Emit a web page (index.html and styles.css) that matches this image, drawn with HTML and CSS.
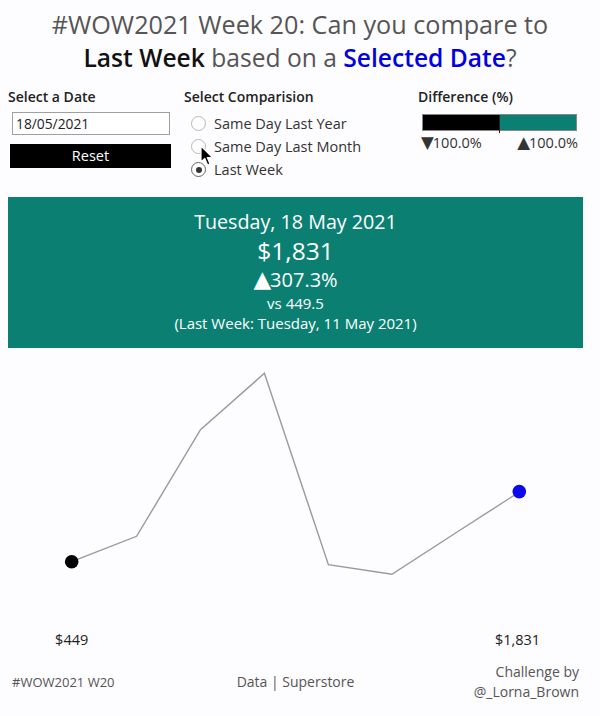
FILE: index.html
```html
<!DOCTYPE html>
<html lang="en">
<head>
<meta charset="utf-8">
<title>#WOW2021 Week 20</title>
<link rel="stylesheet" href="styles.css">
</head>
<body>
<div class="page">
  <header class="title">
    <div class="title-line">#WOW2021 Week 20: Can you compare to</div>
    <div class="title-line title-line-2"><span class="em-dark">Last Week</span> based on a <span class="em-blue">Selected Date</span>?</div>
  </header>

  <section class="controls">
    <div class="ctl ctl-date">
      <div class="ctl-label">Select a Date</div>
      <div class="date-box">18/05/2021</div>
      <div class="reset-btn">Reset</div>
    </div>
    <div class="ctl ctl-compare">
      <div class="ctl-label">Select Comparision</div>
      <div class="radio-row"><span class="radio"></span><span>Same Day Last Year</span></div>
      <div class="radio-row"><span class="radio"></span><span>Same Day Last Month</span></div>
      <div class="radio-row"><span class="radio radio-on"></span><span>Last Week</span></div>
      <svg class="cursor" width="14" height="22" viewBox="0 0 14 22">
        <path d="M1 1 L1 17 L4.8 13.4 L7.6 20 L10 19 L7.3 12.6 L12.5 12.6 Z" fill="#000" stroke="#fff" stroke-width="1.2" stroke-linejoin="round"/>
      </svg>
    </div>
    <div class="ctl ctl-diff">
      <div class="ctl-label">Difference (%)</div>
      <div class="diff-bar"><span class="diff-neg"></span><span class="diff-pos"></span><span class="diff-tick"></span></div>
      <div class="diff-legend"><span><span class="tri">▼</span>100.0%</span><span><span class="tri">▲</span>100.0%</span></div>
    </div>
  </section>

  <section class="kpi">
    <div class="kpi-date">Tuesday, 18 May 2021</div>
    <div class="kpi-value">$1,831</div>
    <div class="kpi-change"><span class="tri">▲</span>307.3%</div>
    <div class="kpi-small kpi-vs">vs 449.5</div>
    <div class="kpi-small">(Last Week: Tuesday, 11 May 2021)</div>
  </section>

  <svg class="chart" width="600" height="307" viewBox="0 348 600 307">
    <polyline points="71.6,561.7 136.6,536.3 200.5,429.7 264.4,373.3 328.4,564.7 391.9,574.3 455.6,533 519.3,492" fill="none" stroke="#999" stroke-width="1.4" stroke-linejoin="miter"/>
    <circle cx="71.7" cy="561.7" r="6.8" fill="#000"/>
    <circle cx="519.3" cy="491.6" r="6.8" fill="#0a0aeb"/>
    <text class="chart-label" x="71.7" y="645" text-anchor="middle">$449</text>
    <text class="chart-label" x="517.5" y="645" text-anchor="middle">$1,831</text>
  </svg>

  <footer class="footer">
    <div class="foot-left">#WOW2021 W20</div>
    <div class="foot-mid">Data | Superstore</div>
    <div class="foot-right">Challenge by<br>@_Lorna_Brown</div>
  </footer>
</div>
</body>
</html>
```

FILE: styles.css
```css
html, body {
  margin: 0;
  padding: 0;
  background: #fdfcfe;
}

body {
  font-family: "Open Sans", Lato, "Liberation Sans", sans-serif;
  color: #333;
}

.page {
  width: 600px;
  height: 716px;
  display: flex;
  flex-direction: column;
  overflow: hidden;
}

.title {
  padding-top: 7px;
  margin-bottom: 13px;
  text-align: center;
  color: #555;
  font-size: 25.2px;
  line-height: 34px;
}

.title-line-2 {
  font-size: 24.6px;
}

.em-dark {
  color: #111;
  font-weight: 600;
}

.em-blue {
  color: #0000e0;
  font-weight: 600;
}

.controls {
  display: flex;
  position: relative;
  height: 109px;
}

.ctl {
  display: flex;
  flex-direction: column;
  position: relative;
}

.ctl-label {
  font-size: 14px;
  line-height: 18px;
  font-weight: 600;
  color: #222;
}

.ctl-date {
  margin-left: 8px;
  width: 163px;
}

.date-box {
  margin-top: 6px;
  margin-left: 4px;
  width: 153px;
  height: 21px;
  border: 1px solid #a0a0a0;
  background: #fff;
  font-size: 13.8px;
  line-height: 21px;
  padding-left: 3px;
  box-sizing: content-box;
  color: #222;
}

.reset-btn {
  margin-top: 9px;
  margin-left: 2px;
  width: 161px;
  height: 24px;
  background: #000;
  color: #fff;
  font-size: 14.5px;
  line-height: 24px;
  text-align: center;
}

.ctl-compare {
  margin-left: 13px;
  width: 234px;
}

.radio-row {
  display: flex;
  align-items: center;
  height: 23px;
  padding-left: 7px;
  font-size: 14.5px;
  color: #333;
  gap: 8px;
}

.ctl-compare .ctl-label + .radio-row {
  margin-top: 6px;
}

.radio {
  width: 13px;
  height: 13px;
  border: 1px solid #b8b8b8;
  border-radius: 50%;
  background: #fff;
  position: relative;
  flex: none;
}

.radio-on {
  border-color: #666;
}

.radio-on::after {
  content: "";
  position: absolute;
  left: 3.5px;
  top: 3.5px;
  width: 6px;
  height: 6px;
  border-radius: 50%;
  background: #333;
}

.cursor {
  position: absolute;
  left: 16px;
  top: 57px;
}

.ctl-diff {
  width: 160px;
}

.diff-bar {
  margin-top: 8px;
  margin-left: 4px;
  width: 153px;
  height: 15px;
  border: 1px solid #888;
  display: flex;
  position: relative;
}

.diff-neg {
  width: 77px;
  background: #000;
}

.diff-pos {
  flex: 1;
  background: #0b8072;
}

.diff-tick {
  position: absolute;
  left: 76px;
  top: 0;
  width: 1px;
  height: 18px;
  background: #222;
}

.diff-legend {
  display: flex;
  justify-content: space-between;
  margin-left: 3px;
  width: 157px;
  margin-top: 3px;
  font-size: 14.5px;
  line-height: 18px;
  color: #333;
}

.tri {
  font-family: "DejaVu Sans", sans-serif;
  font-size: 1.15em;
  line-height: 1;
  letter-spacing: -1px;
}

.kpi {
  margin: 0 17px 0 8px;
  height: 151px;
  background: #0b8072;
  color: #fff;
  text-align: center;
  padding-top: 11px;
  box-sizing: border-box;
}

.kpi-date {
  font-size: 19.7px;
  line-height: 28px;
}

.kpi-value {
  font-size: 24.5px;
  line-height: 30px;
}

.kpi-change {
  font-size: 20px;
  line-height: 28px;
}

.kpi-small {
  font-size: 15px;
  line-height: 20px;
}

.kpi-vs {
  line-height: 19px;
}

.chart {
  display: block;
  flex: none;
}

.chart-label {
  font-family: "Open Sans", Lato, "Liberation Sans", sans-serif;
  font-size: 14.5px;
  fill: #222;
}

.footer {
  display: grid;
  grid-template-columns: 1fr auto 1fr;
  align-items: center;
  height: 53px;
  padding: 0 21px 0 12px;
  font-size: 14px;
  line-height: 20px;
  color: #555;
}

.foot-left {
  justify-self: start;
  font-size: 13px;
}

.foot-right {
  justify-self: end;
  text-align: right;
}
```
